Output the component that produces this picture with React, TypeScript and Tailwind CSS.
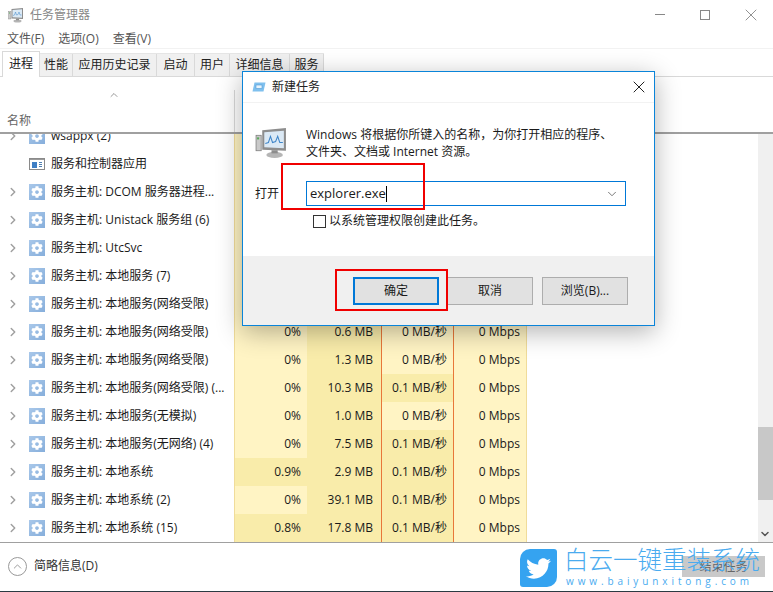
import { FaTwitter, FaCog } from 'react-icons/fa'
import { ChevronDown, ChevronRight, ChevronUp, X } from 'lucide-react'

const font = "font-['Open_Sans','Noto_Sans_CJK_SC',sans-serif]"

const tabs = [
  { label: '性能', width: 'w-[33px]' },
  { label: '应用历史记录', width: 'w-[84px]' },
  { label: '启动', width: 'w-[38px]' },
  { label: '用户', width: 'w-[35px]' },
  { label: '详细信息', width: 'w-[60px]' },
  { label: '服务', width: 'w-[34px]' },
]

type Row = { name: string; cpu?: string; mem?: string; disk?: string; net?: string; noArrow?: boolean; svc?: boolean; hot?: boolean }

const rows: Row[] = [
  { name: 'wsappx (2)' },
  { name: '服务和控制器应用', noArrow: true, svc: true },
  { name: '服务主机: DCOM 服务器进程...' },
  { name: '服务主机: Unistack 服务组 (6)' },
  { name: '服务主机: UtcSvc' },
  { name: '服务主机: 本地服务 (7)' },
  { name: '服务主机: 本地服务(网络受限)' },
  { name: '服务主机: 本地服务(网络受限)', cpu: '0%', mem: '0.6 MB', disk: '0 MB/秒', net: '0 Mbps' },
  { name: '服务主机: 本地服务(网络受限)', cpu: '0%', mem: '1.3 MB', disk: '0 MB/秒', net: '0 Mbps' },
  { name: '服务主机: 本地服务(网络受限) (...', cpu: '0%', mem: '10.3 MB', disk: '0.1 MB/秒', net: '0 Mbps' },
  { name: '服务主机: 本地服务(无模拟)', cpu: '0%', mem: '1.0 MB', disk: '0 MB/秒', net: '0 Mbps' },
  { name: '服务主机: 本地服务(无网络) (4)', cpu: '0%', mem: '7.5 MB', disk: '0.1 MB/秒', net: '0 Mbps' },
  { name: '服务主机: 本地系统', cpu: '0.9%', mem: '2.9 MB', disk: '0.1 MB/秒', net: '0 Mbps', hot: true },
  { name: '服务主机: 本地系统 (2)', cpu: '0%', mem: '39.1 MB', disk: '0.1 MB/秒', net: '0 Mbps' },
  { name: '服务主机: 本地系统 (15)', cpu: '0.8%', mem: '17.8 MB', disk: '0.1 MB/秒', net: '0 Mbps', hot: true },
]

function GearIcon() {
  return (
    <div className="flex h-4 w-4 shrink-0 items-center justify-center bg-gradient-to-br from-[#a9c8ea] to-[#86aedb]">
      <FaCog className="h-3 w-3 text-white" />
    </div>
  )
}

function ServiceIcon() {
  return (
    <svg width="16" height="12" viewBox="0 0 16 12" className="shrink-0">
      <rect x="0.5" y="0.5" width="15" height="11" fill="#fff" stroke="#8a8a8a" />
      <rect x="1" y="1" width="14" height="1" fill="#9a9a9a" />
      <rect x="3" y="4" width="5" height="6" fill="#3f7fc4" />
      <path d="M10 4.5h3M10 6.5h3M10 8.5h3" stroke="#4f7fb0" />
    </svg>
  )
}

function MonitorIcon({ size }: { size: number }) {
  return (
    <svg width={size} height={size} viewBox="0 0 32 32" className="shrink-0">
      <rect x="1" y="9" width="5" height="15" fill="#c9c9c9" stroke="#777" strokeWidth="0.7" />
      <rect x="2" y="11" width="2" height="2" fill="#5aa85a" />
      <path d="M7 4 L30 2 V24 L7 23 Z" fill="#8d8d8d" />
      <path d="M9 6 L28 4.5 V21.5 L9 20.5 Z" fill="#dbe9f5" />
      <path d="M10 17 L13 16 L15 10 L17 16 L20 15 L22 10 L24 16 L27 16" fill="none" stroke="#3f86c9" strokeWidth="1" />
      <ellipse cx="19" cy="28" rx="8" ry="3" fill="#b5b5b5" />
      <rect x="16" y="23.5" width="6" height="3" fill="#8d8d8d" />
    </svg>
  )
}

function RunIcon() {
  return (
    <svg width="14" height="10" viewBox="0 0 14 10" className="mr-[6px] shrink-0">
      <path d="M2.5 0.5 H13.5 L11.5 9.5 H0.5 Z" fill="#7fc0ee" />
      <rect x="4" y="3" width="6" height="3.5" fill="#e8f4fc" stroke="#4f9ad6" strokeWidth="0.6" />
    </svg>
  )
}

function DataCell({ className, value, dark }: { className: string; value?: string; dark?: boolean }) {
  return (
    <div className={`${className} ${dark ? 'bg-[#f9ecaa]' : 'bg-[#fff4c4]'} flex h-full shrink-0 items-center justify-end`}>
      {value}
    </div>
  )
}

function TableRow({ row }: { row: Row }) {
  const diskHot = row.disk === '0.1 MB/秒'
  return (
    <div className="flex h-[28px] text-[12px] text-[#1a1a1a]">
      <div className="flex w-[234px] shrink-0 items-center overflow-hidden">
        <div className="mr-[3px] flex w-[26px] shrink-0 justify-center">
          {!row.noArrow && <ChevronRight className="h-[14px] w-[14px] text-[#a0a0a0]" strokeWidth={2.5} />}
        </div>
        <div className="mr-[6px] flex w-[16px] shrink-0 justify-center">{row.svc ? <ServiceIcon /> : <GearIcon />}</div>
        <span className="whitespace-nowrap">{row.name}</span>
      </div>
      <DataCell className="w-[73px] border-l border-[#f0dc9a] pr-[6px]" value={row.cpu} dark={row.hot} />
      <DataCell className="w-[74px] pr-[8px]" value={row.mem} dark />
      <DataCell className="w-[72px] border-l border-[#e8773a] pr-[6px]" value={row.disk} dark={diskHot} />
      <DataCell className="w-[74px] border-x border-l-[#e8773a] border-r-[#f0dc9a] pr-[6px]" value={row.net} />
    </div>
  )
}

function DialogButton({ label, active }: { label: string; active?: boolean }) {
  return (
    <div
      className={`flex h-[28px] w-[86px] items-center justify-center bg-[#e1e1e1] text-[12px] text-[#1a1a1a] ${
        active ? 'border-2 border-[#0078d7]' : 'border border-[#adadad]'
      }`}
    >
      {label}
    </div>
  )
}

function NewTaskDialog() {
  return (
    <div className="absolute left-[242px] top-[71px] flex h-[255px] w-[413px] flex-col border border-[#0a84d9] bg-white shadow-[0_6px_24px_rgba(0,0,0,0.3)]">
      <div className="flex h-[30px] shrink-0 items-center pl-[9px] pr-[5px] text-[12px] text-[#222]">
        <RunIcon />
        <span>新建任务</span>
        <X className="ml-auto h-[20px] w-[20px] text-[#222]" strokeWidth={1.2} />
      </div>
      <div className="flex h-[154px] shrink-0 flex-col border-t border-[#f2f2f2]">
        <div className="flex h-[78px] shrink-0 pl-[12px] pt-[23px]">
          <MonitorIcon size={33} />
          <p className="ml-[18px] text-[12px] leading-[17px] text-[#1a1a1a]">
            Windows 将根据你所键入的名称，为你打开相应的程序、
            <br />
            文件夹、文档或 Internet 资源。
          </p>
        </div>
        <div className="flex items-center pl-[12px]">
          <span className="w-[51px] text-[12px] text-[#1a1a1a]">打开</span>
          <div className="flex h-[25px] w-[320px] items-center border border-[#0078d7] pl-[3px] pr-[6px] text-[13px] text-[#1a1a1a]">
            <span>explorer.exe</span>
            <div className="h-[16px] w-px bg-black" />
            <ChevronDown className="ml-auto h-[14px] w-[14px] text-[#666]" strokeWidth={1.5} />
          </div>
        </div>
        <div className="mt-[6px] flex items-center pl-[70px] text-[12px] text-[#1a1a1a]">
          <div className="mr-[3px] h-[13px] w-[13px] border border-[#333]" />
          <span>以系统管理权限创建此任务。</span>
        </div>
      </div>
      <div className="flex flex-1 items-start bg-[#f0f0f0] pl-[110px] pt-[21px]">
        <DialogButton label="确定" active />
        <div className="ml-[8px]">
          <DialogButton label="取消" />
        </div>
        <div className="ml-[9px]">
          <DialogButton label="浏览(B)..." />
        </div>
      </div>
    </div>
  )
}

export default function App() {
  return (
    <div className={`relative flex h-[592px] w-[773px] flex-col overflow-hidden bg-white ${font}`}>
      {/* Title bar */}
      <div className="flex h-[29px] shrink-0 items-center pl-[8px] text-[12px] text-[#888]">
        <MonitorIcon size={16} />
        <span className="ml-[6px]">任务管理器</span>
        <div className="ml-auto flex items-center">
          <div className="mr-[35px] h-px w-[10px] bg-[#888]" />
          <div className="mr-[31px] h-[10px] w-[10px] border border-[#888]" />
          <X className="mr-[12px] h-[20px] w-[20px] text-[#888]" strokeWidth={1.1} />
        </div>
      </div>

      {/* Menu */}
      <div className="flex h-[20px] shrink-0 items-center gap-[14px] border-b border-[#f2f2f2] pl-[7px] text-[12px] text-[#555]">
        <span>文件(F)</span>
        <span>选项(O)</span>
        <span>查看(V)</span>
      </div>

      {/* Tabs */}
      <div className="flex h-[28px] shrink-0 items-end border-b border-[#d9d9d9] pl-[2px] text-[12px] text-[#222]">
        <div className="z-10 -mb-px flex h-[26px] w-[38px] items-center justify-center border-x border-t border-[#d9d9d9] bg-white pb-[2px]">进程</div>
        <div className="flex h-[23px] border-t border-[#e5e5e5] bg-[#f0f0f0]">
          {tabs.map((tab) => (
            <div key={tab.label} className={`${tab.width} flex h-full items-center justify-center whitespace-nowrap border-r border-[#d9d9d9]`}>
              {tab.label}
            </div>
          ))}
        </div>
      </div>

      {/* Column header */}
      <div className="relative flex h-[57px] shrink-0 flex-col border-b-2 border-[#a0a0a0] bg-white">
        <div className="flex h-[35px] items-center justify-center pr-[545px]">
          <ChevronUp className="h-[12px] w-[12px] text-[#777]" strokeWidth={1.5} />
        </div>
        <span className="pl-[7px] text-[12px] text-[#666]">名称</span>
        <div className="absolute bottom-0 left-[234px] top-[13px] w-px bg-[#d9d9d9]" />
      </div>

      {/* Table + scrollbar */}
      <div className="flex min-h-0 flex-1">
        <div className="min-w-0 flex-1 overflow-hidden">
          <div className="-mt-[12px]">
            {rows.map((row, i) => (
              <TableRow key={i} row={row} />
            ))}
          </div>
        </div>
        <div className="relative w-[15px] shrink-0 bg-[#f0f0f0]">
          <div className="absolute left-0 right-0 top-[293px] h-[73px] bg-[#c8c8c8]" />
          <ChevronDown className="absolute bottom-[2px] left-[1px] h-[12px] w-[12px] text-[#555]" strokeWidth={3} />
        </div>
      </div>

      {/* Footer */}
      <div className="relative flex h-[49px] shrink-0 items-center border-t border-[#a0a0a0] bg-white pb-[2px] pl-[8px] text-[12px] text-[#333]">
        <div className="mr-[7px] flex h-[19px] w-[19px] items-center justify-center rounded-full border border-[#999]">
          <ChevronUp className="h-[13px] w-[13px] text-[#888]" strokeWidth={1.5} />
        </div>
        <span>简略信息(D)</span>
        <div className="absolute left-[682px] top-[13px] flex h-[21px] w-[83px] items-center justify-center bg-[#c9c9c9] text-[12px] text-[#666]">
          结束任务
        </div>
        {/* Watermark */}
        <div className="absolute left-[520px] top-[6px] flex h-[38px] w-[37px] items-center justify-center rounded-bl-[3px] rounded-br-[10px] rounded-tl-[10px] rounded-tr-[3px] bg-[#35a3f0]">
          <FaTwitter className="h-[25px] w-[25px] text-white" />
        </div>
        <div className="absolute left-[564px] top-[2px] w-[200px] text-[#4aabef]">
          <div className="whitespace-nowrap text-[24.5px] font-light leading-[30px]">白云一键重装系统</div>
          <div className="whitespace-nowrap pl-[2px] text-[10px] leading-[12px] tracking-[3.9px]">www.baiyunxitong.com</div>
        </div>
      </div>
      <div className="h-px shrink-0 bg-[#2b3a42]" />

      <NewTaskDialog />

      {/* Red annotation boxes */}
      <div className="absolute left-[281px] top-[163px] h-[47px] w-[144px] border-2 border-[#f00000]" />
      <div className="absolute left-[335px] top-[269px] h-[42px] w-[113px] border-2 border-[#f00000]" />
    </div>
  )
}
